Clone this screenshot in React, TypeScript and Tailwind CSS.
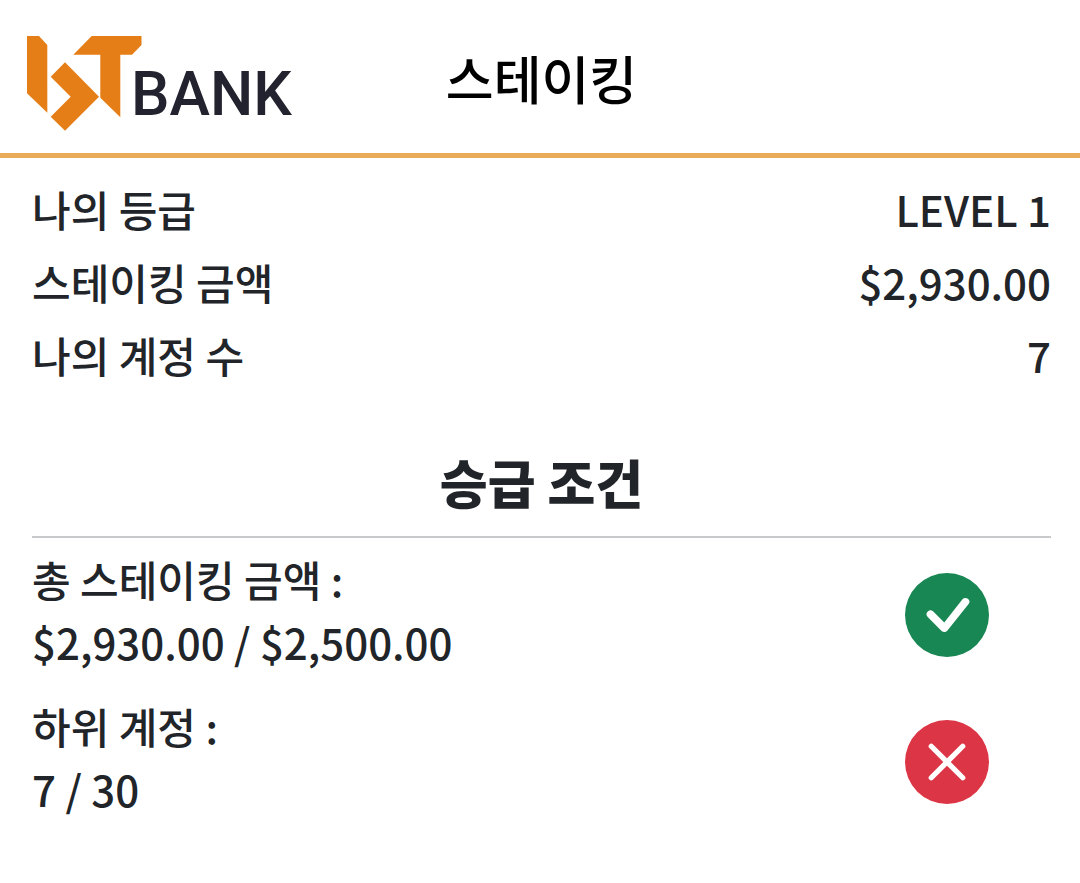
import React from "react";

const account = [
  { label: "나의 등급", value: "LEVEL 1" },
  { label: "스테이킹 금액", value: "$2,930.00" },
  { label: "나의 계정 수", value: "7" },
];

function Logo() {
  return (
    <svg viewBox="0 0 270 100" className="h-[100px] w-[270px]" role="img" aria-label="BT BANK">
      <g fill="#e67e17">
        <path d="M2 2H14L22.3 11V78.7L2 59.3Z" />
        <path d="M40 28.3L74 62.7L40 96.7L25.7 82.7L45.7 62.7L25.7 42.7Z" />
        <path d="M66.7 2H116.5V11L107 20.7H95.3V83.3L75.3 63.7V20.7H48.3Z" />
      </g>
      <text x="106" y="81" fontSize="61" fontWeight="500" fill="#23232f" fontFamily="Roboto, Liberation Sans, sans-serif">BANK</text>
    </svg>
  );
}

function StatusIcon({ met }: { met: boolean }) {
  return (
    <svg viewBox="0 0 16 16" className={met ? "size-[84px] text-[#198754]" : "size-[84px] text-[#dc3545]"} fill="currentColor" role="img" aria-label={met ? "충족" : "미충족"}>
      {met ? (
        <path d="M16 8A8 8 0 1 1 0 8a8 8 0 0 1 16 0m-3.97-3.03a.75.75 0 0 0-1.08.022L7.477 9.417 5.384 7.323a.75.75 0 0 0-1.06 1.06L6.97 11.03a.75.75 0 0 0 1.079-.02l3.992-4.99a.75.75 0 0 0-.01-1.05z" />
      ) : (
        <path d="M16 8A8 8 0 1 1 0 8a8 8 0 0 1 16 0M5.354 4.646a.5.5 0 1 0-.708.708L7.293 8l-2.647 2.646a.5.5 0 0 0 .708.708L8 8.707l2.646 2.647a.5.5 0 0 0 .708-.708L8.707 8l2.647-2.646a.5.5 0 0 0-.708-.708L8 7.293z" />
      )}
    </svg>
  );
}

function Condition({ label, value, met }: { label: string; value: string; met: boolean }) {
  return (
    <li className="flex items-center justify-between pr-[62px]">
      <p className="leading-[63px]">
        {label}
        <br />
        {value}
      </p>
      <span className="pt-2.5">
        <StatusIcon met={met} />
      </span>
    </li>
  );
}

export default function App() {
  return (
    <div className="min-h-screen bg-white font-['Noto_Sans_CJK_KR','Noto_Sans_CJK_SC',sans-serif] text-[42px] font-medium text-[#212529]">
      <header className="grid grid-cols-[1fr_auto_1fr] items-center border-b-5 border-[#e9ab57] pt-[34px] pr-[22px] pb-[19px] pl-[25px]">
        <Logo />
        <h1 className="pb-3 text-[52px] leading-[80px] text-black">스테이킹</h1>
        <span />
      </header>
      <main className="pt-[19px] pr-[29px] pl-8">
        <dl className="flex flex-col gap-[10px] leading-[63px]">
          {account.map((row) => (
            <div key={row.label} className="flex justify-between">
              <dt>{row.label}</dt>
              <dd>{row.value}</dd>
            </div>
          ))}
        </dl>
        <h2 className="mt-[56px] border-b-2 border-[#c8c9ca] pb-[14px] text-center text-[52px] leading-[80px] font-black">승급 조건</h2>
        <ul className="mt-[9px] flex flex-col gap-[21px]">
          <Condition label="총 스테이킹 금액 :" value="$2,930.00 / $2,500.00" met />
          <Condition label="하위 계정 :" value="7 / 30" met={false} />
        </ul>
      </main>
    </div>
  );
}
